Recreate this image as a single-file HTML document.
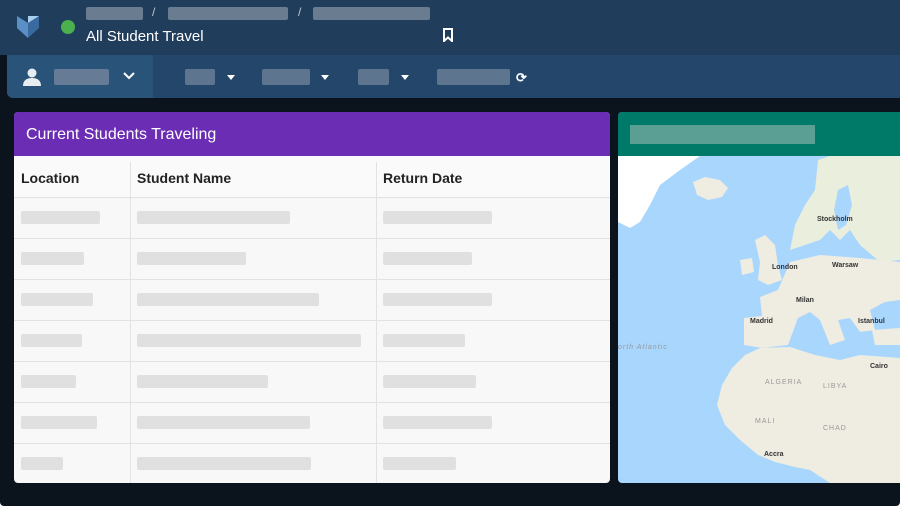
<!DOCTYPE html>
<html><head><style>
body{margin:0;width:908px;height:514px;background:#fff;font-family:"Liberation Sans",sans-serif;overflow:hidden;position:relative}
.app{position:absolute;left:0;top:0;width:900px;height:506px;background:#0b131d;border-radius:0 0 4px 4px;overflow:hidden}
.top{position:absolute;left:0;top:0;width:900px;height:55px;background:#203d5c}
.bar{position:absolute;background:#6a7c8f;border-radius:2px}
.nav{position:absolute;left:7px;top:55px;width:893px;height:43px;background:#24466b;border-radius:0 0 0 6px}
.nb{position:absolute;background:#5e7590;border-radius:2px;height:16px;top:14px}
.tri{position:absolute;top:20px;width:0;height:0;border-left:4px solid transparent;border-right:4px solid transparent;border-top:5px solid #fff}
.card{position:absolute;left:14px;top:112px;width:596px;height:371px;background:#f8f8f9;border-radius:4px;overflow:hidden}
.ch{height:44px;background:#6a2db3;color:#fff;font-size:16px;line-height:46px;padding-left:12px}
.th{position:absolute;top:46px;height:41px;line-height:41px;font-size:14px;font-weight:bold;color:#222}
.row{position:absolute;left:0;width:596px;height:1px;background:#e2e2e4}
.vl{position:absolute;width:1px;background:#e2e2e4}
.g{position:absolute;height:13px;background:#e0e0e0;border-radius:2px}
.map{position:absolute;left:618px;top:112px;width:282px;height:371px;border-radius:4px 0 0 4px;overflow:hidden;background:#a8d6fd}
</style></head><body>
<div class="app">
<div class="top">
<svg style="position:absolute;left:16px;top:14px" width="24" height="26" viewBox="0 0 24 26"><polygon points="1,2 12,9 12,24 1,14" fill="#5b8fc7"/><polygon points="12,9 23,2 23,14 12,24" fill="#3a6aa0"/><polygon points="12,2 23,2 12,9" fill="#a9cff0"/></svg>
<div style="position:absolute;left:61px;top:20px;width:14px;height:14px;border-radius:50%;background:#4cb04f"></div>
<div class="bar" style="left:86px;top:7px;width:57px;height:13px"></div>
<div style="position:absolute;left:152px;top:5px;color:#c0c8d2;font-size:12px">/</div>
<div class="bar" style="left:168px;top:7px;width:120px;height:13px"></div>
<div style="position:absolute;left:298px;top:5px;color:#c0c8d2;font-size:12px">/</div>
<div class="bar" style="left:313px;top:7px;width:117px;height:13px"></div>
<div style="position:absolute;left:86px;top:28px;color:#fff;font-size:15px">All Student Travel</div>
<svg style="position:absolute;left:442px;top:28px" width="12" height="14" viewBox="0 0 12 14"><path d="M2,1H10V13L6,9.5L2,13Z" fill="none" stroke="#fff" stroke-width="2"/></svg>
</div>
<div class="nav">
<div style="position:absolute;left:0;top:0;width:146px;height:43px;background:#2a5379;border-radius:0 0 0 6px"></div>
<svg style="position:absolute;left:15px;top:12px" width="20" height="20" viewBox="0 0 20 20"><circle cx="10" cy="6" r="4.5" fill="#e8edf2"/><path d="M1,19C1,13 5,11 10,11C15,11 19,13 19,19Z" fill="#e8edf2"/></svg>
<div class="nb" style="left:47px;width:55px;background:#667c96"></div>
<svg style="position:absolute;left:115px;top:16px" width="14" height="10" viewBox="0 0 14 10"><path d="M2,2L7,7L12,2" fill="none" stroke="#fff" stroke-width="2"/></svg>
<div class="nb" style="left:178px;width:30px"></div><div class="tri" style="left:220px"></div>
<div class="nb" style="left:255px;width:48px"></div><div class="tri" style="left:314px"></div>
<div class="nb" style="left:351px;width:31px"></div><div class="tri" style="left:394px"></div>
<div class="nb" style="left:430px;width:73px"></div>
<div style="position:absolute;left:509px;top:15px;color:#fff;font-size:13px;font-weight:bold">⟳</div>
</div>
<div class="card">
<div class="ch">Current Students Traveling</div>
<div style="position:absolute;top:44px;left:0;width:596px;height:41px;background:#fafafa"></div>
<div class="th" style="left:7px">Location</div>
<div class="th" style="left:123px">Student Name</div>
<div class="th" style="left:369px">Return Date</div>
<div class="vl" style="left:116px;top:50px;height:321px"></div>
<div class="vl" style="left:362px;top:50px;height:321px"></div>
<div class="row" style="top:85px"></div><div class="row" style="top:126px"></div><div class="row" style="top:167px"></div><div class="row" style="top:208px"></div><div class="row" style="top:249px"></div><div class="row" style="top:290px"></div><div class="row" style="top:331px"></div>
<div class="g" style="left:7px;top:99px;width:79px"></div><div class="g" style="left:123px;top:99px;width:153px"></div><div class="g" style="left:369px;top:99px;width:109px"></div>
<div class="g" style="left:7px;top:140px;width:63px"></div><div class="g" style="left:123px;top:140px;width:109px"></div><div class="g" style="left:369px;top:140px;width:89px"></div>
<div class="g" style="left:7px;top:181px;width:72px"></div><div class="g" style="left:123px;top:181px;width:182px"></div><div class="g" style="left:369px;top:181px;width:109px"></div>
<div class="g" style="left:7px;top:222px;width:61px"></div><div class="g" style="left:123px;top:222px;width:224px"></div><div class="g" style="left:369px;top:222px;width:82px"></div>
<div class="g" style="left:7px;top:263px;width:55px"></div><div class="g" style="left:123px;top:263px;width:131px"></div><div class="g" style="left:369px;top:263px;width:93px"></div>
<div class="g" style="left:7px;top:304px;width:76px"></div><div class="g" style="left:123px;top:304px;width:173px"></div><div class="g" style="left:369px;top:304px;width:109px"></div>
<div class="g" style="left:7px;top:345px;width:42px"></div><div class="g" style="left:123px;top:345px;width:174px"></div><div class="g" style="left:369px;top:345px;width:73px"></div>
</div>
<div class="map">
<div style="position:absolute;left:0;top:0;width:282px;height:44px;background:#007a68"></div>
<div style="position:absolute;left:12px;top:13px;width:185px;height:19px;background:#5a9e94"></div>
<svg style="position:absolute;left:0;top:44px" width="282" height="327" viewBox="618 156 282 327">
<polygon points="618,156 700,156 680,170 660,185 650,205 640,222 630,228 618,222" fill="#fff"/>
<polygon points="693,182 705,177 720,180 728,188 722,197 708,200 697,195" fill="#efece2"/>
<polygon points="790,250 795,225 805,205 815,190 818,160 830,156 900,156 900,260 880,262 860,245 850,230 840,240 830,230 820,240 805,245" fill="#eaeedd"/>
<polygon points="838,190 848,185 852,205 846,225 838,230 834,210" fill="#a8d6fd"/>
<polygon points="755,240 765,235 775,245 778,265 782,280 768,285 758,280 760,262" fill="#efece2"/>
<polygon points="740,260 752,258 754,272 742,275" fill="#efece2"/>
<polygon points="778,290 790,262 820,255 860,258 900,262 900,300 885,302 870,310 875,330 860,332 850,318 838,320 845,340 830,345 820,320 810,312 798,318 788,345 762,348 744,345 744,318 762,316 760,297" fill="#efece2"/>
<polygon points="717,405 722,385 732,368 745,355 760,348 790,347 815,355 840,360 860,355 900,358 900,483 830,483 810,470 795,467 775,462 758,455 740,440 725,425" fill="#efece2"/>
<polygon points="872,330 900,328 900,345 875,345" fill="#efece2"/>
</svg>
<div style="position:absolute;font-size:7px;font-weight:bold;color:#333;left:154px;top:152px">London</div>
<div style="position:absolute;font-size:7px;font-weight:bold;color:#333;left:199px;top:104px">Stockholm</div>
<div style="position:absolute;font-size:7px;font-weight:bold;color:#333;left:214px;top:150px">Warsaw</div>
<div style="position:absolute;font-size:7px;font-weight:bold;color:#333;left:178px;top:185px">Milan</div>
<div style="position:absolute;font-size:7px;font-weight:bold;color:#333;left:132px;top:206px">Madrid</div>
<div style="position:absolute;font-size:7px;font-weight:bold;color:#333;left:240px;top:206px">Istanbul</div>
<div style="position:absolute;font-size:7px;font-weight:bold;color:#333;left:252px;top:251px">Cairo</div>
<div style="position:absolute;font-size:7px;font-weight:bold;color:#333;left:146px;top:339px">Accra</div>
<div style="position:absolute;font-size:7px;color:#999;letter-spacing:1px;left:147px;top:267px">ALGERIA</div>
<div style="position:absolute;font-size:7px;color:#999;letter-spacing:1px;left:205px;top:271px">LIBYA</div>
<div style="position:absolute;font-size:7px;color:#999;letter-spacing:1px;left:137px;top:306px">MALI</div>
<div style="position:absolute;font-size:7px;color:#999;letter-spacing:1px;left:205px;top:313px">CHAD</div>
<div style="position:absolute;font-size:7px;color:#999;letter-spacing:1px;left:0px;top:232px;font-style:italic">orth Atlantic</div>
</div>
</div>
</body></html>
